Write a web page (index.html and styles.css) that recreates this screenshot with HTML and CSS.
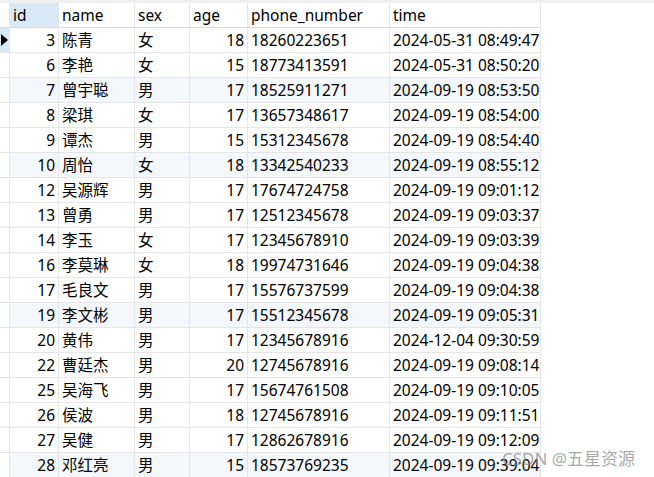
FILE: index.html
```html
<!DOCTYPE html>
<html>
<head>
<meta charset="utf-8">
<link rel="stylesheet" href="styles.css">
</head>
<body>
<div class="view">
  <div class="strip"></div>
  <div class="grid">
    <div class="row head">
      <div class="c ind"></div>
      <div class="c id sorted">id</div>
      <div class="c name">name</div>
      <div class="c sex">sex</div>
      <div class="c age">age</div>
      <div class="c phone">phone_number</div>
      <div class="c time">time</div>
    </div>
    <div class="row"><div class="c ind cur"><span class="tri"></span></div><div class="c id num">3</div><div class="c name">陈青</div><div class="c sex">女</div><div class="c age num">18</div><div class="c phone">18260223651</div><div class="c time">2024-05-31 08:49:47</div></div>
    <div class="row"><div class="c ind"></div><div class="c id num">6</div><div class="c name">李艳</div><div class="c sex">女</div><div class="c age num">15</div><div class="c phone">18773413591</div><div class="c time">2024-05-31 08:50:20</div></div>
    <div class="row alt"><div class="c ind"></div><div class="c id num">7</div><div class="c name">曾宇聪</div><div class="c sex">男</div><div class="c age num">17</div><div class="c phone">18525911271</div><div class="c time">2024-09-19 08:53:50</div></div>
    <div class="row"><div class="c ind"></div><div class="c id num">8</div><div class="c name">梁琪</div><div class="c sex">女</div><div class="c age num">17</div><div class="c phone">13657348617</div><div class="c time">2024-09-19 08:54:00</div></div>
    <div class="row"><div class="c ind"></div><div class="c id num">9</div><div class="c name">谭杰</div><div class="c sex">男</div><div class="c age num">15</div><div class="c phone">15312345678</div><div class="c time">2024-09-19 08:54:40</div></div>
    <div class="row alt"><div class="c ind"></div><div class="c id num">10</div><div class="c name">周怡</div><div class="c sex">女</div><div class="c age num">18</div><div class="c phone">13342540233</div><div class="c time">2024-09-19 08:55:12</div></div>
    <div class="row"><div class="c ind"></div><div class="c id num">12</div><div class="c name">吴源辉</div><div class="c sex">男</div><div class="c age num">17</div><div class="c phone">17674724758</div><div class="c time">2024-09-19 09:01:12</div></div>
    <div class="row"><div class="c ind"></div><div class="c id num">13</div><div class="c name">曾勇</div><div class="c sex">男</div><div class="c age num">17</div><div class="c phone">12512345678</div><div class="c time">2024-09-19 09:03:37</div></div>
    <div class="row"><div class="c ind"></div><div class="c id num">14</div><div class="c name">李玉</div><div class="c sex">女</div><div class="c age num">17</div><div class="c phone">12345678910</div><div class="c time">2024-09-19 09:03:39</div></div>
    <div class="row"><div class="c ind"></div><div class="c id num">16</div><div class="c name">李莫琳</div><div class="c sex">女</div><div class="c age num">18</div><div class="c phone">19974731646</div><div class="c time">2024-09-19 09:04:38</div></div>
    <div class="row"><div class="c ind"></div><div class="c id num">17</div><div class="c name">毛良文</div><div class="c sex">男</div><div class="c age num">17</div><div class="c phone">15576737599</div><div class="c time">2024-09-19 09:04:38</div></div>
    <div class="row alt"><div class="c ind"></div><div class="c id num">19</div><div class="c name">李文彬</div><div class="c sex">男</div><div class="c age num">17</div><div class="c phone">15512345678</div><div class="c time">2024-09-19 09:05:31</div></div>
    <div class="row"><div class="c ind"></div><div class="c id num">20</div><div class="c name">黄伟</div><div class="c sex">男</div><div class="c age num">17</div><div class="c phone">12345678916</div><div class="c time">2024-12-04 09:30:59</div></div>
    <div class="row"><div class="c ind"></div><div class="c id num">22</div><div class="c name">曹廷杰</div><div class="c sex">男</div><div class="c age num">20</div><div class="c phone">12745678916</div><div class="c time">2024-09-19 09:08:14</div></div>
    <div class="row"><div class="c ind"></div><div class="c id num">25</div><div class="c name">吴海飞</div><div class="c sex">男</div><div class="c age num">17</div><div class="c phone">15674761508</div><div class="c time">2024-09-19 09:10:05</div></div>
    <div class="row"><div class="c ind"></div><div class="c id num">26</div><div class="c name">侯波</div><div class="c sex">男</div><div class="c age num">18</div><div class="c phone">12745678916</div><div class="c time">2024-09-19 09:11:51</div></div>
    <div class="row"><div class="c ind"></div><div class="c id num">27</div><div class="c name">吴健</div><div class="c sex">男</div><div class="c age num">17</div><div class="c phone">12862678916</div><div class="c time">2024-09-19 09:12:09</div></div>
    <div class="row alt"><div class="c ind"></div><div class="c id num">28</div><div class="c name">邓红亮</div><div class="c sex">男</div><div class="c age num">15</div><div class="c phone">18573769235</div><div class="c time">2024-09-19 09:39:04</div></div>
  </div>
  <div class="watermark">CSDN @五星资源</div>
</div>
</body>
</html>
```

FILE: styles.css
```css
html, body {
  margin: 0;
  padding: 0;
  background: #ffffff;
  overflow: hidden;
}
.view {
  position: relative;
  width: 654px;
  height: 477px;
  overflow: hidden;
  font-family: "Noto Sans", "Noto Sans CJK SC", sans-serif;
  font-size: 15.5px;
  color: #000000;
}
.strip {
  height: 3px;
  background: #f0f0f0;
}
.grid {
  display: flex;
  flex-direction: column;
  width: 541px;
}
.row {
  display: flex;
  height: 25px;
}
.row.alt .c {
  background: #f4f8fc;
}
.c {
  box-sizing: border-box;
  height: 25px;
  border-right: 1px solid #e6e6e6;
  border-bottom: 1px solid #e6e6e6;
  padding: 0 3px;
  line-height: 24px;
  white-space: nowrap;
  overflow: hidden;
}
.head .c {
  border-bottom-color: #d9d9d9;
  background: #ffffff;
}
.head .c.sorted {
  background: #dae9f6;
}
.row .c.ind {
  width: 10px;
  padding: 0;
  background: #ffffff;
  display: flex;
  align-items: center;
}
.row .c.ind.cur {
  background: #dae9f6;
}
.tri {
  width: 0;
  height: 0;
  border-top: 6px solid transparent;
  border-bottom: 6px solid transparent;
  border-left: 7px solid #000000;
  margin-left: 1px;
}
.id { width: 49px; }
.name { width: 76px; }
.sex { width: 55px; }
.age { width: 58px; }
.phone { width: 142px; }
.time { width: 151px; padding-right: 0; }
.num { text-align: right; }
.watermark {
  position: absolute;
  left: 502px;
  top: 447px;
  font-size: 17px;
  line-height: 24px;
  color: rgba(140, 140, 140, 0.75);
  white-space: nowrap;
}
```
